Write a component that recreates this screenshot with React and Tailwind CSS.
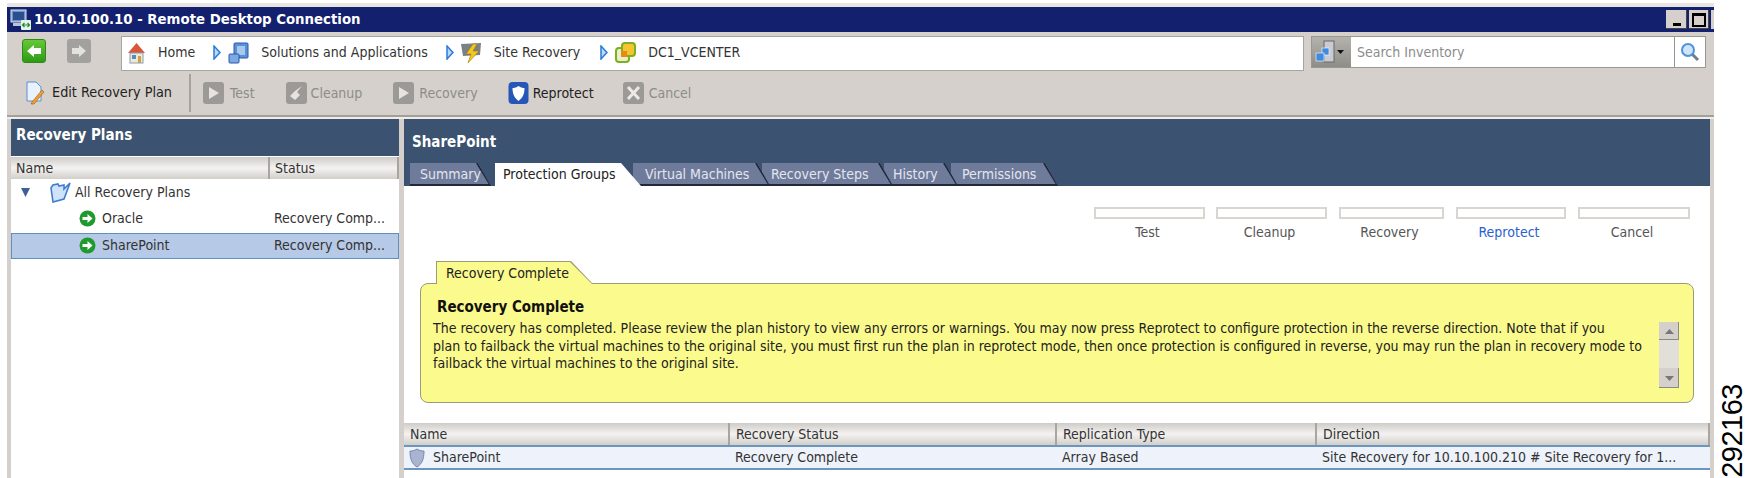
import React from "react";

const uiFont = "font-['DejaVu_Sans_Condensed','DejaVu_Sans',sans-serif]";

const tabs = [
  { label: "Summary", cls: "w-[81px] z-[6] pl-[10px]" },
  { label: "Protection Groups", cls: "ml-[4px] w-[146px] z-[7] pl-[8px]", active: true },
  { label: "Virtual Machines", cls: "ml-[-8px] w-[137px] z-[5] pl-[12px]" },
  { label: "Recovery Steps", cls: "ml-[-8px] w-[131px] z-[4] pl-[9px]" },
  { label: "History", cls: "ml-[-9px] w-[74px] z-[3] pl-[9px]" },
  { label: "Permissions", cls: "ml-[-7px] w-[107px] z-[2] pl-[11px]" },
];

const steps = [
  { label: "Test", cls: "w-[111px]" },
  { label: "Cleanup", cls: "w-[111px] ml-[11px]" },
  { label: "Recovery", cls: "w-[105px] ml-[12px]" },
  { label: "Reprotect", cls: "w-[110px] ml-[12px]", on: true },
  { label: "Cancel", cls: "w-[112px] ml-[12px]" },
];

function Chevron({ className }) {
  return (
    <svg width="8" height="15" viewBox="0 0 8 15" className={className}>
      <path d="M1 1 L7 7.5 L1 14 Z" fill="#bcd6f5" stroke="#2a7bdc" strokeWidth="1.5" />
    </svg>
  );
}

function GreenArrow() {
  return (
    <svg width="17" height="17" viewBox="0 0 17 17">
      <circle cx="8.5" cy="8.5" r="8" fill="#1f9a2c" />
      <path d="M3.5 7 H8.5 V4 L13.5 8.5 L8.5 13 V10 H3.5 Z" fill="#fff" />
    </svg>
  );
}

function Shield({ w = 20, h = 22, fill = "#fff", bg = "#2457b8" }) {
  return (
    <svg width={w} height={h} viewBox="0 0 20 22">
      <rect x="0" y="0" width="20" height="22" rx="4" fill={bg} />
      <path d="M10 4 C13 6 15 6 16 6 C16 12 14 16 10 19 C6 16 4 12 4 6 C5 6 7 6 10 4 Z" fill={fill} />
    </svg>
  );
}

function GreyPlay() {
  return (
    <svg width="21" height="22" viewBox="0 0 21 22">
      <rect width="21" height="22" rx="3" fill="#9c9a96" />
      <path d="M6 5 L16 11 L6 17 Z" fill="#e6e4e0" />
    </svg>
  );
}

function HeaderCell({ className = "", children }) {
  return (
    <div className={`flex items-center border-r-2 border-[#a9a6a0] bg-gradient-to-b from-[#cfccc8] via-[#f4f3f2] to-[#d2cfca] pt-[1px] ${className}`}>
      {children}
    </div>
  );
}

function Tab({ tab }) {
  // dark outer shape shows through as the bottom and slanted edge
  return (
    <div
      className={`relative h-[23px] shrink-0 ${tab.cls} flex items-center ${
        tab.active ? "bg-white text-[#222]" : "bg-[#6f7b9b] text-[#e3e6ee] shadow-[inset_0_-2px_0_#20283a]"
      } ${tab.active
        ? "[clip-path:polygon(0_0,calc(100%-20px)_0,100%_100%,0_100%)]"
        : "[clip-path:polygon(0_0,calc(100%-13px)_0,100%_100%,0_100%)]"}`}
    >
      <span className="whitespace-nowrap">{tab.label}</span>
      {!tab.active && (
        <svg className="absolute right-0 top-0" width="15" height="23" viewBox="0 0 15 23">
          <path d="M1 0 L15 23" stroke="#20283a" strokeWidth="2" />
        </svg>
      )}
    </div>
  );
}

export default function App() {
  return (
    <div className={`relative h-[478px] w-[1747px] overflow-hidden bg-white pl-[7px] pt-[3px] text-[14px] text-[#333] ${uiFont}`}>
      <div className="flex h-[475px] w-[1707px] flex-col bg-[#d5d0cb]">
        <div className="h-[4px] shrink-0 bg-[#e9e6e1]" />

        {/* title bar */}
        <div className="flex h-[25px] shrink-0 items-center bg-[#12206e] pl-[3px]">
          <svg width="22" height="22" viewBox="0 0 22 22">
            <rect x="1" y="1" width="15" height="12" fill="#6f93c8" stroke="#dfe6f2" />
            <rect x="3" y="3" width="11" height="8" fill="#2b4f8e" />
            <rect x="3" y="14" width="11" height="3" fill="#b7c3d6" />
            <rect x="11" y="11" width="10" height="10" rx="1" fill="#e8f3e6" />
            <path d="M13 16 h6 M14.5 14 l-2 2 l2 2 M17.5 14 l2 2 l-2 2" stroke="#1f8a34" strokeWidth="1.2" fill="none" />
          </svg>
          <span className="ml-[2px] text-[14.8px] font-bold text-white">10.10.100.10 - Remote Desktop Connection</span>
          <div className="ml-auto flex h-[19px] items-center gap-[2px]">
            <div className="flex h-[19px] w-[21px] items-end justify-center bg-[#d5d0cb] pb-[3px] shadow-[inset_-1px_-1px_0_#444]">
              <div className="h-[3px] w-[8px] bg-black" />
            </div>
            <div className="flex h-[19px] w-[20px] items-center justify-center bg-[#d5d0cb] shadow-[inset_-1px_-1px_0_#444]">
              <div className="h-[14px] w-[14px] border-2 border-t-[3px] border-black" />
            </div>
            <div className="h-[19px] w-[3px] bg-[#d5d0cb]" />
          </div>
        </div>

        {/* nav row */}
        <div className="flex h-[40px] shrink-0 items-start pt-[4px]">
          <div className="ml-[15px] mt-[3px] flex h-[24px] w-[24px] items-center justify-center rounded-[3px] border border-[#2f8a18] bg-gradient-to-b from-[#66c83a] to-[#2e9a14]">
            <svg width="16" height="14" viewBox="0 0 16 14"><path d="M1 7 L8 1 V4 H15 V10 H8 V13 Z" fill="#fff" /></svg>
          </div>
          <div className="ml-[21px] mt-[3px] flex h-[24px] w-[24px] items-center justify-center rounded-[3px] bg-[#a3a19e]">
            <svg width="16" height="14" viewBox="0 0 16 14"><path d="M15 7 L8 1 V4 H1 V10 H8 V13 Z" fill="#e4e2df" /></svg>
          </div>

          <div className="ml-[30px] flex h-[35px] w-[1183px] items-center border border-[#a8a49e] bg-white pb-[2px]">
            <svg className="ml-[5px]" width="19" height="22" viewBox="0 0 19 22">
              <path d="M9.5 1 L18 11 H1 Z" fill="#d8573c" />
              <rect x="3" y="11" width="13" height="10" fill="#f2e8cf" stroke="#8a9db5" />
              <rect x="5" y="13" width="4" height="4" fill="#4d8fd0" />
              <rect x="11" y="14" width="3" height="7" fill="#c8a24a" />
            </svg>
            <span className="ml-[12px]">Home</span>
            <Chevron className="ml-[18px]" />
            <svg className="ml-[7px]" width="21" height="22" viewBox="0 0 21 22">
              <rect x="6" y="1" width="14" height="15" rx="1" fill="#5a90d8" stroke="#2a5aa8" />
              <rect x="9" y="4" width="8" height="9" fill="#a8c8ee" />
              <rect x="1" y="12" width="10" height="9" rx="1" fill="#7aa9e4" stroke="#2a5aa8" />
            </svg>
            <span className="ml-[12px]">Solutions and Applications</span>
            <Chevron className="ml-[18px]" />
            <svg className="ml-[7px]" width="21" height="22" viewBox="0 0 21 22">
              <path d="M0 2 L20 1 L19 13 L2 14 Z" fill="#7b7f88" />
              <path d="M12 2 L5 12 H10 L7 21 L18 9 H12 L16 2 Z" fill="#f2c81e" stroke="#9a7a10" strokeWidth="0.6" />
            </svg>
            <span className="ml-[12px]">Site Recovery</span>
            <Chevron className="ml-[20px]" />
            <svg className="ml-[7px]" width="21" height="21" viewBox="0 0 21 21">
              <rect x="1" y="6" width="13" height="14" rx="3" fill="#e8f0c8" stroke="#7fae1e" strokeWidth="2" />
              <rect x="7" y="1" width="13" height="13" rx="3" fill="#f5c531" stroke="#7fae1e" strokeWidth="2" />
              <rect x="6" y="9" width="6" height="6" fill="#e8891a" />
            </svg>
            <span className="ml-[12px]">DC1_VCENTER</span>
          </div>

          <div className="ml-[7px] flex h-[32px] w-[395px] border border-[#9a9790] bg-white">
            <div className="flex w-[39px] items-center gap-[2px] bg-gradient-to-b from-[#b5b3ae] to-[#8f8d88] pl-[3px]">
              <svg width="20" height="24" viewBox="0 0 20 24">
                <rect x="9" y="1" width="10" height="21" fill="#c9cbd0" stroke="#66686e" />
                <rect x="7" y="8" width="7" height="7" fill="#3f8be0" stroke="#fff" strokeWidth="0.6" />
                <rect x="1" y="13" width="8" height="8" fill="#3f8be0" stroke="#fff" strokeWidth="0.6" />
              </svg>
              <svg width="7" height="4" viewBox="0 0 7 4"><path d="M0 0 H7 L3.5 4 Z" fill="#111" /></svg>
            </div>
            <span className="ml-[6px] flex-1 self-center text-[#8c8c8c]">Search Inventory</span>
            <div className="flex w-[31px] items-center justify-center border-l border-[#9a9790]">
              <svg width="20" height="20" viewBox="0 0 20 20">
                <circle cx="8" cy="8" r="6" fill="#cfe4fa" stroke="#4d93d8" strokeWidth="2" />
                <path d="M12.5 12.5 L18 18" stroke="#6d7f92" strokeWidth="3" />
              </svg>
            </div>
          </div>
        </div>

        {/* toolbar */}
        <div className="flex h-[43px] shrink-0 items-center pb-[1px]">
          <svg className="ml-[18px]" width="20" height="24" viewBox="0 0 20 24">
            <path d="M2 1 H11 L16 6 V20 H2 Z" fill="#e8f1fc" stroke="#5b8fd0" />
            <path d="M7 21 L17 9 L19 11 L9 23 L6 23 Z" fill="#f0a030" stroke="#9a5a10" strokeWidth="0.6" />
          </svg>
          <span className="ml-[7px] text-[14.3px] text-[#222]">Edit Recovery Plan</span>
          <div className="ml-[17px] h-[38px] w-[2px] bg-[#a6a39d]" />
          <div className="ml-[12px]"><GreyPlay /></div>
          <span className="ml-[6px] text-[#8e8c88]">Test</span>
          <svg className="ml-[31px]" width="21" height="22" viewBox="0 0 21 22">
            <rect width="21" height="22" rx="3" fill="#9c9a96" />
            <path d="M16 4 L11 10 L14 13 L9 18 L4 14 L9 9 Z" fill="#e6e4e0" />
          </svg>
          <span className="ml-[4px] text-[#8e8c88]">Cleanup</span>
          <div className="ml-[31px]"><GreyPlay /></div>
          <span className="ml-[5px] text-[#8e8c88]">Recovery</span>
          <div className="ml-[30px] flex"><Shield w={21} h={22} /></div>
          <span className="ml-[4px] text-[#222]">Reprotect</span>
          <svg className="ml-[29px]" width="21" height="22" viewBox="0 0 21 22">
            <rect width="21" height="22" rx="3" fill="#9c9a96" />
            <path d="M5 5 L16 17 M16 5 L5 17" stroke="#eceae6" strokeWidth="3" />
          </svg>
          <span className="ml-[5px] text-[#8e8c88]">Cancel</span>
        </div>

        <div className="h-[2px] shrink-0 bg-[#a3a09a]" />
        <div className="h-[2px] shrink-0 bg-[#efedea]" />

        {/* panels */}
        <div className="flex min-h-0 flex-1 gap-[5px] pl-[4px]">
          <div className="flex w-[388px] flex-col bg-white">
            <div className="flex h-[37px] shrink-0 items-center bg-[#3b5270] pb-[5px] pl-[5px] text-[15px] font-bold text-white">
              Recovery Plans
            </div>
            <div className="mt-[1px] grid h-[22px] shrink-0 grid-cols-[259px_129px]">
              <HeaderCell className="pl-[5px]">Name</HeaderCell>
              <HeaderCell className="pl-[5px]">Status</HeaderCell>
            </div>
            <div className="flex h-[26px] items-center">
              <svg className="ml-[10px]" width="9" height="10" viewBox="0 0 9 10"><path d="M0 1 H9 L4.5 10 Z" fill="#3f5f98" /></svg>
              <svg className="ml-[20px]" width="21" height="22" viewBox="0 0 21 22">
                <path d="M3 21 L1 7 L3 4 L8 3 L9 5 L14 4 L14 8 L20 2 L14 18 Z" fill="#cfe3fa" stroke="#3f7cd0" strokeWidth="1.6" />
              </svg>
              <span className="ml-[4px]">All Recovery Plans</span>
            </div>
            <div className="flex h-[27px] items-center">
              <div className="ml-[68px] flex"><GreenArrow /></div>
              <span className="ml-[6px] w-[172px]">Oracle</span>
              <span>Recovery Comp...</span>
            </div>
            <div className="mt-[1px] flex h-[26px] items-center border border-[#5c8fc4] bg-[#b6c9e6] pb-[2px]">
              <div className="ml-[67px] flex"><GreenArrow /></div>
              <span className="ml-[6px] w-[172px]">SharePoint</span>
              <span>Recovery Comp...</span>
            </div>
          </div>

          <div className="flex w-[1306px] flex-col bg-white">
            <div className="flex h-[67px] shrink-0 flex-col bg-[#3b5270]">
              <div className="h-[44px] pl-[8px] pt-[14px] text-[15px] font-bold leading-[18px] text-white">SharePoint</div>
              <div className="flex pl-[6px] text-[14px]">
                {tabs.map((t) => (
                  <Tab key={t.label} tab={t} />
                ))}
              </div>
            </div>

            <div className="mt-[21px] flex pl-[690px]">
              {steps.map((s) => (
                <div key={s.label} className={`flex flex-col items-center ${s.cls}`}>
                  <div className="h-[12px] w-full border-2 border-[#d9d6d1] bg-white" />
                  <span className={`mr-[4px] mt-[4px] leading-[18px] ${s.on ? "text-[#2a5fd0]" : "text-[#555]"}`}>{s.label}</span>
                </div>
              ))}
            </div>

            {/* recovery status note */}
            <div className="ml-[32px] mt-[20px] h-[23px] w-[157px] bg-[#9b9b78] pl-[1px] pt-[1px] [clip-path:polygon(0_0,calc(100%-22px)_0,100%_100%,0_100%)]">
              <div className="flex h-[22px] w-[155px] items-center bg-[#fbfa8c] pl-[9px] text-[#222] [clip-path:polygon(0_0,calc(100%-22px)_0,100%_100%,0_100%)]">
                Recovery Complete
              </div>
            </div>
            <div className="ml-[16px] mt-[-1px] flex h-[120px] w-[1274px] rounded-[8px] border border-[#9b9b78] bg-[#fbfa8c]">
              <div className="flex-1 pl-[12px] pt-[14px] text-[#222]">
                <div className="pl-[4px] text-[15px] font-bold leading-[18px] text-[#111]">Recovery Complete</div>
                <div className="mt-[4px] whitespace-nowrap leading-[17.5px]">
                  <div>The recovery has completed. Please review the plan history to view any errors or warnings. You may now press Reprotect to configure protection in the reverse direction. Note that if you</div>
                  <div>plan to failback the virtual machines to the original site, you must first run the plan in reprotect mode, then once protection is configured in reverse, you may run the plan in recovery mode to</div>
                  <div>failback the virtual machines to the original site.</div>
                </div>
              </div>
              <div className="mr-[14px] mt-[38px] flex h-[66px] w-[20px] flex-col justify-between bg-[#e2dfd8]">
                <div className="flex h-[18px] items-center justify-center bg-[#d5d0cb] shadow-[inset_-1px_-1px_0_#8c8a84]">
                  <svg width="9" height="5" viewBox="0 0 9 5"><path d="M4.5 0 L9 5 H0 Z" fill="#777" /></svg>
                </div>
                <div className="flex h-[20px] items-center justify-center bg-[#d5d0cb] shadow-[inset_-1px_-1px_0_#8c8a84]">
                  <svg width="9" height="5" viewBox="0 0 9 5"><path d="M0 0 H9 L4.5 5 Z" fill="#777" /></svg>
                </div>
              </div>
            </div>

            {/* table */}
            <div className="mt-[20px] grid h-[22px] shrink-0 grid-cols-[326px_327px_260px_393px]">
              <HeaderCell className="pl-[6px]">Name</HeaderCell>
              <HeaderCell className="pl-[6px]">Recovery Status</HeaderCell>
              <HeaderCell className="pl-[6px]">Replication Type</HeaderCell>
              <HeaderCell className="pl-[6px]">Direction</HeaderCell>
            </div>
            <div className="grid h-[25px] shrink-0 grid-cols-[326px_327px_260px_393px] items-center border-y-2 border-[#6a96bf] bg-[#eef2fb]">
              <div className="flex items-center pl-[5px]">
                <svg width="16" height="20" viewBox="0 0 16 20">
                  <path d="M8 1 C11 3 13 3 15 3 C15 11 13 16 8 19 C3 16 1 11 1 3 C3 3 5 3 8 1 Z" fill="#a9b4d0" stroke="#7a86a8" />
                </svg>
                <span className="ml-[8px]">SharePoint</span>
              </div>
              <span className="pl-[5px]">Recovery Complete</span>
              <span className="pl-[5px]">Array Based</span>
              <span className="whitespace-nowrap pl-[5px]">Site Recovery for 10.10.100.210 # Site Recovery for 1...</span>
            </div>
          </div>
        </div>
      </div>

      {/* figure number */}
      <div className="absolute left-[1719px] top-[384px] rotate-180 font-['Liberation_Sans',sans-serif] text-[29px] leading-[26px] tracking-[-0.5px] text-black [writing-mode:vertical-rl]">
        292163
      </div>
    </div>
  );
}
